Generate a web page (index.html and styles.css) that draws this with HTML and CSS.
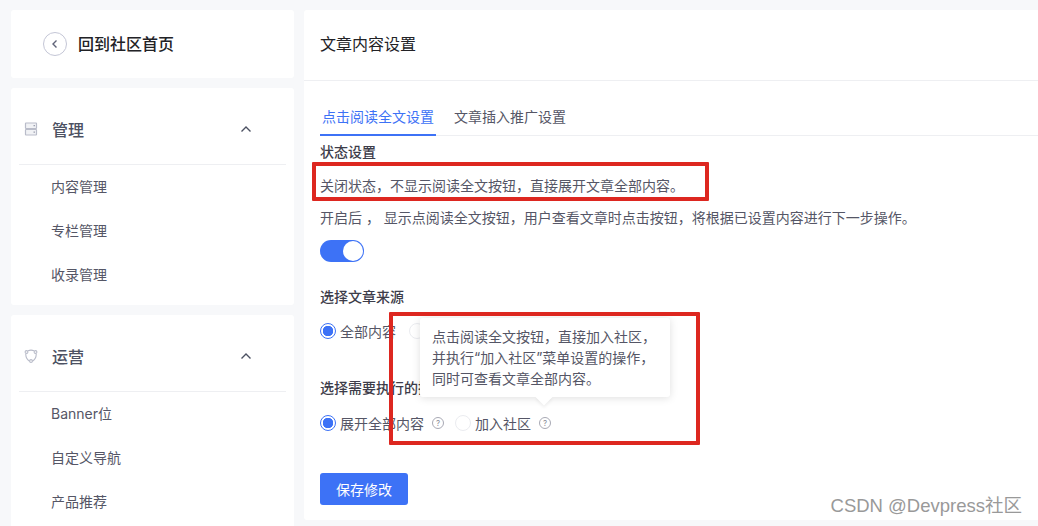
FILE: index.html
```html
<!DOCTYPE html>
<html lang="zh-CN">
<head>
    <meta charset="UTF-8">
    <title>文章内容设置</title>
    <link rel="stylesheet" href="styles.css">
</head>
<body>
    <div class="layout">
        <!-- Sidebar -->
        <aside class="sidebar">
            <div class="card back-card">
                <span class="back-icon">
                    <svg width="12" height="12" viewBox="0 0 12 12"><path d="M7.5 2.5 4 6l3.500 3.500" fill="none" stroke="#5f6378" stroke-width="1.4"/></svg>
                </span>
                <span class="back-text">回到社区首页</span>
            </div>

            <div class="card menu-card">
                <div class="menu-head">
                    <svg class="menu-icon" width="14" height="14" viewBox="0 0 14 14">
                        <rect x="1.500" y="1" width="11" height="5.500" rx="0.500" fill="#f1f2f5" stroke="#b9bcc9" stroke-width="1.200"/>
                        <rect x="1.500" y="7.500" width="11" height="5.500" rx="0.500" fill="#f1f2f5" stroke="#b9bcc9" stroke-width="1.200"/>
                        <path d="M9.500 3.700h1.500M9.500 10.200h1.500" stroke="#9da0b0" stroke-width="1.200"/>
                    </svg>
                    <span class="menu-title">管理</span>
                    <svg class="menu-arrow" width="12" height="8" viewBox="0 0 12 8"><path d="M1.500 6.500 6 2l4.500 4.500" fill="none" stroke="#4c5162" stroke-width="1.400"/></svg>
                </div>
                <a class="menu-item">内容管理</a>
                <a class="menu-item">专栏管理</a>
                <a class="menu-item">收录管理</a>
            </div>

            <div class="card menu-card">
                <div class="menu-head">
                    <svg class="menu-icon" width="14" height="14" viewBox="0 0 14 14" fill="none" stroke="#b9bcc9" stroke-width="1.100">
                        <path d="M4 1.800C5.800 1 8.200 1 10 1.800M1.800 4.800c-.2 2.800.8 5.200 3.800 7.400M12.200 4.800c.2 2.800-.8 5.200-3.800 7.400"/>
                        <circle cx="2.500" cy="3" r="1.400"/>
                        <circle cx="11.500" cy="3" r="1.400"/>
                        <circle cx="7" cy="12" r="1.400"/>
                    </svg>
                    <span class="menu-title">运营</span>
                    <svg class="menu-arrow" width="12" height="8" viewBox="0 0 12 8"><path d="M1.500 6.500 6 2l4.500 4.500" fill="none" stroke="#4c5162" stroke-width="1.400"/></svg>
                </div>
                <a class="menu-item">Banner位</a>
                <a class="menu-item">自定义导航</a>
                <a class="menu-item">产品推荐</a>
            </div>
        </aside>

        <!-- Main panel -->
        <main class="panel">
            <h1 class="panel-title">文章内容设置</h1>

            <div class="tabs">
                <span class="tab tab-active">点击阅读全文设置</span>
                <span class="tab">文章插入推广设置</span>
            </div>

            <h2 class="field-title first">状态设置</h2>
            <p class="field-text">关闭状态，不显示阅读全文按钮，直接展开文章全部内容。</p>
            <p class="field-text">开启后 ， 显示点阅读全文按钮，用户查看文章时点击按钮，将根据已设置内容进行下一步操作。</p>
            <div class="switch"><span class="switch-knob"></span></div>

            <h2 class="field-title source">选择文章来源</h2>
            <div class="radio-row">
                <span class="radio radio-on"></span><span class="radio-label">全部内容</span>
                <span class="radio radio-second"></span>
            </div>

            <h2 class="field-title action">选择需要执行的操作</h2>
            <div class="radio-row">
                <span class="radio radio-on"></span><span class="radio-label">展开全部内容</span>
                <span class="help">?</span>
                <span class="radio radio-third"></span><span class="radio-label">加入社区</span>
                <span class="help">?</span>
            </div>

            <button class="save-btn">保存修改</button>
        </main>
    </div>

    <!-- Overlays -->
    <div class="tooltip">
        点击阅读全文按钮，直接加入社区，<br>
        并执行“加入社区”菜单设置的操作，<br>
        同时可查看文章全部内容。
    </div>
    <div class="mark mark-top"></div>
    <div class="mark mark-bottom"></div>
    <div class="watermark">CSDN @Devpress社区</div>
</body>
</html>
```

FILE: styles.css
```css
/* Global */
body {
    margin: 0;
    height: 526px;
    overflow: hidden;
    position: relative;
    background-color: #f7f8fa;
    font-family: "Inter", "Noto Sans CJK SC", sans-serif;
    font-size: 14px;
    color: #555666;
}

.layout {
    display: flex;
    gap: 10px;
    padding: 10px 0 0 11px;
}

.card {
    background: #ffffff;
    border-radius: 3px;
}

/* Sidebar */
.sidebar {
    width: 283px;
    flex-shrink: 0;
    display: flex;
    flex-direction: column;
    gap: 10px;
}

.back-card {
    height: 68px;
    display: flex;
    align-items: center;
    padding-left: 32px;
    box-sizing: border-box;
}

.back-icon {
    width: 22px;
    height: 22px;
    border: 1px solid #c4c6d6;
    border-radius: 50%;
    display: flex;
    align-items: center;
    justify-content: center;
    margin-right: 11px;
}

.back-text {
    font-size: 16px;
    font-weight: 500;
    color: #222226;
    line-height: 22px;
}

.menu-card {
    padding: 0 8px 8px;
}

.menu-head {
    height: 76px;
    box-sizing: content-box;
    display: flex;
    align-items: center;
    border-bottom: 1px solid #eeeff2;
    padding-left: 5px;
    padding-top: 0;
}

.menu-icon {
    margin-right: 14px;
    position: relative;
    top: 3px;
}

.menu-title {
    font-size: 16px;
    font-weight: 500;
    color: #4c5162;
    padding-top: 6px;
}

.menu-arrow {
    margin-left: auto;
    margin-right: 34px;
    padding-top: 6px;
}

.menu-item {
    display: block;
    height: 44px;
    line-height: 44px;
    padding-left: 32px;
    font-size: 14px;
    color: #555666;
}

/* Main panel */
.panel {
    flex: 1;
    height: 510px;
    box-sizing: border-box;
    background: #ffffff;
    border-radius: 3px 0 0 3px;
    padding: 0 0 0 16px;
}

.panel-title {
    margin: 0 0 0 -16px;
    padding: 0 16px;
    height: 70px;
    line-height: 68px;
    font-size: 16px;
    font-weight: 400;
    color: #222226;
    border-bottom: 1px solid #eeeff2;
}

.tabs {
    display: flex;
    gap: 16px;
    margin-top: 17px;
    border-bottom: 1px solid #eeeff2;
}

.tab {
    line-height: 38px;
    height: 38px;
    padding: 0 2px;
    box-sizing: border-box;
    color: #555666;
    margin-bottom: -1px;
}

.tab-active {
    color: #3d72f6;
    border-bottom: 2px solid #3d72f6;
}

.field-title {
    margin: 0;
    font-size: 14px;
    font-weight: 500;
    line-height: 20px;
    color: #3d3d4a;
}

.first {
    margin-top: 6px;
}

.field-text {
    margin: 0;
    line-height: 20px;
    color: #555666;
}

.field-text + .field-text {
    margin-top: 12px;
}

.field-title + .field-text {
    margin-top: 14px;
}

.switch {
    width: 44px;
    height: 22px;
    margin-top: 12px;
    border-radius: 11px;
    background: #3d72f6;
    display: flex;
    align-items: center;
    justify-content: flex-end;
    padding-right: 1px;
    box-sizing: border-box;
}

.switch-knob {
    width: 20px;
    height: 20px;
    border-radius: 50%;
    background: #ffffff;
}

.source {
    margin-top: 25px;
}

.action {
    margin-top: 37px;
}

.radio-row {
    display: flex;
    align-items: center;
    height: 20px;
    margin-top: 14px;
}

.action + .radio-row {
    margin-top: 15px;
}

.radio {
    width: 16px;
    height: 16px;
    border-radius: 50%;
    border: 1px solid #ebecf0;
    background: #ffffff;
    box-sizing: border-box;
    flex-shrink: 0;
    margin-right: 4px;
}

.radio-on {
    border-color: #3d72f6;
    background: radial-gradient(circle, #3d72f6 0 5px, #ffffff 5.5px);
}

.radio-second {
    margin-left: 13px;
}

.radio-third {
    margin-left: 11px;
}

.radio-label {
    color: #555666;
}

.help {
    width: 10px;
    height: 10px;
    border: 1px solid #a8a9b4;
    border-radius: 50%;
    margin-left: 8px;
    font-size: 8px;
    line-height: 10px;
    text-align: center;
    color: #8a8b97;
}

.save-btn {
    display: block;
    margin-top: 40px;
    width: 88px;
    height: 32px;
    border: none;
    border-radius: 3px;
    background: #3d72f6;
    color: #ffffff;
    font-family: inherit;
    font-size: 14px;
}

/* Tooltip */
.tooltip {
    position: absolute;
    left: 420px;
    top: 318px;
    width: 250px;
    height: 79px;
    box-sizing: border-box;
    padding: 8px 12px;
    background: #ffffff;
    border-radius: 3px;
    box-shadow: 0 1px 8px rgba(0, 0, 0, 0.13);
    line-height: 21px;
    color: #555666;
    z-index: 2;
}

.tooltip::after {
    content: "";
    position: absolute;
    left: 118px;
    bottom: -6px;
    width: 12px;
    height: 12px;
    background: #ffffff;
    transform: rotate(45deg);
    box-shadow: 2px 2px 3px rgba(0, 0, 0, 0.05);
}

/* Red annotation boxes */
.mark {
    position: absolute;
    box-sizing: border-box;
    border: 4px solid #dd2720;
    border-radius: 1px;
    z-index: 3;
}

.mark-top {
    left: 312px;
    top: 162px;
    width: 397px;
    height: 39px;
}

.mark-bottom {
    left: 389px;
    top: 312px;
    width: 311px;
    height: 133px;
}

/* Watermark */
.watermark {
    position: absolute;
    right: 16px;
    top: 492px;
    font-family: "Liberation Sans", "Noto Sans CJK SC", sans-serif;
    font-size: 18.5px;
    line-height: 28px;
    color: #999999;
    z-index: 4;
}
```
